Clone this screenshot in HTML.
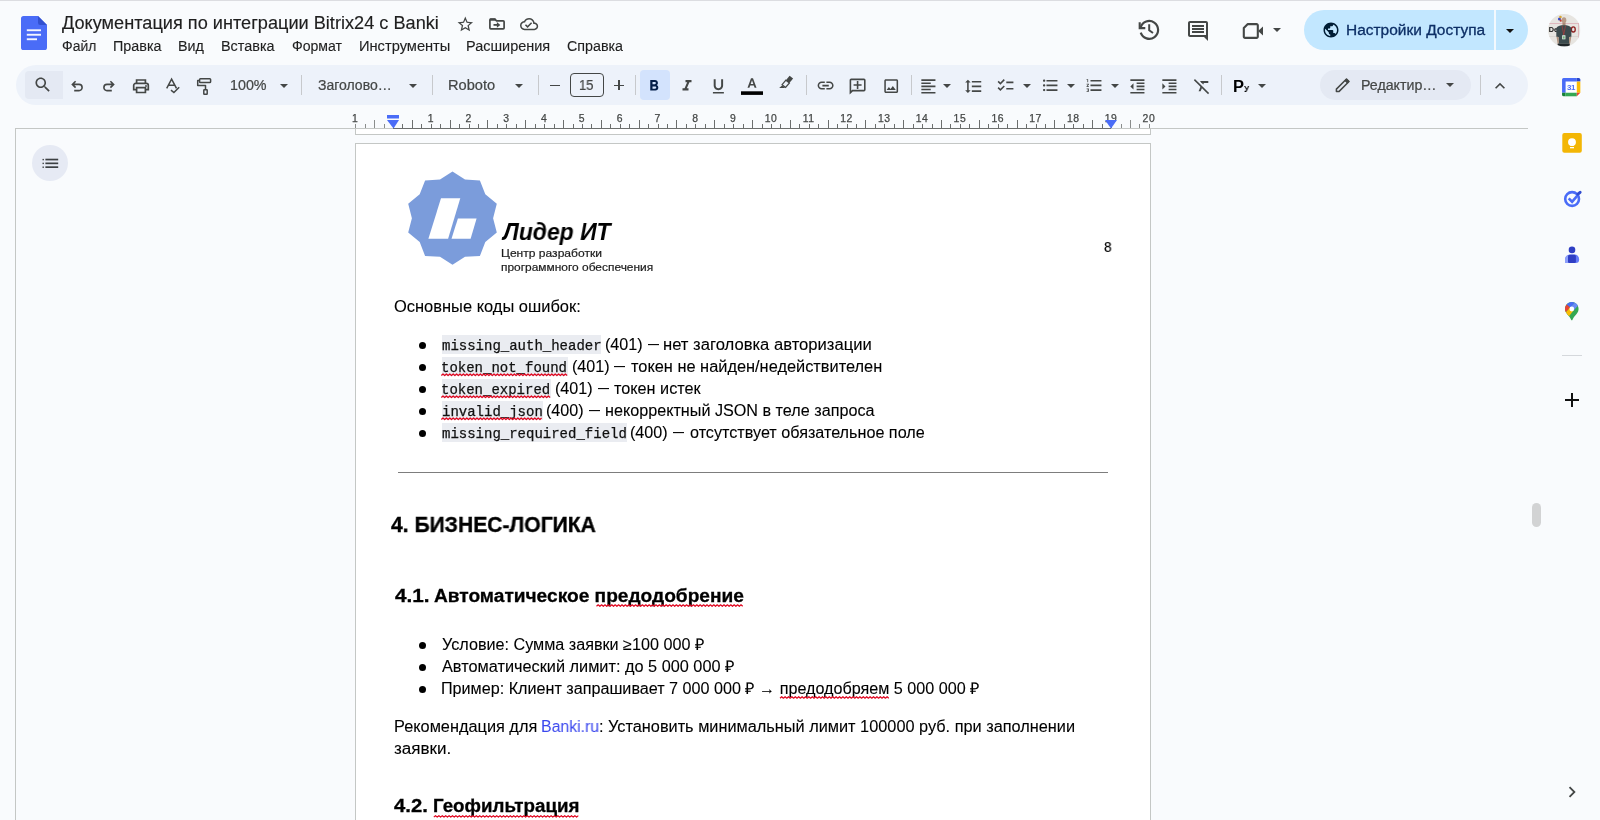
<!DOCTYPE html>
<html lang="ru"><head><meta charset="utf-8">
<title>Документация по интеграции Bitrix24 с Banki – Google Документы</title>
<style>
html,body{margin:0;padding:0}
html{overflow:hidden;width:1600px;height:820px}
body{width:1600px;height:820px;overflow:hidden;background:#f9fbfd;font-family:"Liberation Sans",sans-serif;position:relative;color:#1f1f1f}
.a{position:absolute}
.t{will-change:transform;position:absolute;white-space:nowrap;line-height:1;margin:0;padding:0;transform-origin:0 0}
svg{position:absolute;overflow:visible}
.ic{fill:#444746}
.dv{position:absolute;width:1px;height:20px;top:75px;background:#c7c9cc}
.car{position:absolute;width:0;height:0;border-left:4px solid transparent;border-right:4px solid transparent;border-top:4px solid #444746}
.tb{font-size:14px;color:#444746}
.mn{font-size:14px;color:#1f1f1f;top:39px}
.doc{color:#000}
.p{font-size:14.67px}
.code{font-family:"Liberation Mono",monospace;font-size:14px;color:#1a1a1a}
.cbg{position:absolute;background:#eaecf1;height:19px}
.bul{position:absolute;width:7px;height:7px;border-radius:50%;background:#000}
</style></head><body>
<!-- top hairline -->
<div class="a" style="left:0;top:0;width:1600px;height:1px;background:#dcdde1"></div>
<!-- docs logo -->
<svg style="left:21px;top:16px" width="26" height="34" viewBox="0 0 26 34">
<path d="M2.6 0H17l9 9v22.4A2.6 2.6 0 0 1 23.4 34H2.6A2.6 2.6 0 0 1 0 31.400V2.6A2.6 2.6 0 0 1 2.600 0z" fill="#4a6cf7"/>
<path d="M17 0l9 9h-6.800A2.200 2.200 0 0 1 17 6.800z" fill="#3250d0"/>
<rect x="5.800" y="13.300" width="14.200" height="1.900" fill="#f3f5ff"/><rect x="5.800" y="17.800" width="14.200" height="1.900" fill="#f3f5ff"/><rect x="5.800" y="22.300" width="10.200" height="1.900" fill="#f3f5ff"/>
</svg>
<!-- star / move / cloud -->
<svg class="ic" style="left:455.700px;top:14.800px" width="18.600" height="18.600" viewBox="0 0 24 24"><path d="M22 9.240l-7.190-.620L12 2 9.190 8.630 2 9.240l5.460 4.730L5.820 21 12 17.270 18.180 21l-1.630-7.030L22 9.240zM12 15.400l-3.760 2.270 1-4.280-3.320-2.880 4.380-.38L12 6.100l1.710 4.040 4.380.38-3.320 2.880 1 4.280L12 15.400z"/></svg>
<svg style="left:485px;top:14px" width="24" height="20" viewBox="485 14 24 20"><path d="M490.800 19H494.900L496.500 20.800H503.200A.9 .9 0 0 1 504.100 21.700V28A.9 .9 0 0 1 503.200 28.900H490.800A.9 .9 0 0 1 489.900 28V19.900A.9 .9 0 0 1 490.800 19z" fill="none" stroke="#444746" stroke-width="1.700"/><path d="M489.900 18.600H495.200L496.800 20.800H489.900z" fill="#444746"/><path d="M493.500 24.900H498" stroke="#444746" stroke-width="1.800"/><path d="M496.900 22.100L500.300 24.900 496.900 27.700z" fill="#444746"/></svg>
<svg class="ic" style="left:519.600px;top:15px" width="18.200" height="18.200" viewBox="0 0 24 24"><path d="M19.350 10.040C18.670 6.590 15.640 4 12 4 9.110 4 6.600 5.640 5.350 8.040 2.340 8.360 0 10.910 0 14c0 3.310 2.690 6 6 6h13c2.760 0 5-2.240 5-5 0-2.640-2.050-4.780-4.650-4.960zM19 18H6c-2.210 0-4-1.790-4-4s1.790-4 4-4h.71C7.370 7.690 9.480 6 12 6c3.040 0 5.500 2.460 5.500 5.500v.5H19c1.660 0 3 1.340 3 3s-1.340 3-3 3zm-9-3.820l-2.090-2.090L6.500 13.500 10 17l6.010-6.010-1.410-1.410z"/></svg>
<!-- history -->
<svg style="left:1130px;top:12px" width="36" height="36" viewBox="1130 12 36 36" fill="none" stroke="#444746">
<path d="M1140.64 27.45A8.9 8.9 0 1 1 1140.74 32.65" stroke-width="2.200"/>
<path d="M1139.700 22.300V28.100H1145.300" stroke-width="2.100"/>
<path d="M1149.200 24.300V30.300L1153 33" stroke-width="2"/>
</svg>
<!-- comments -->
<svg class="ic" style="left:1186px;top:19px" width="24" height="24" viewBox="0 0 24 24"><path d="M21.990 4c0-1.100-.89-2-1.990-2H4c-1.100 0-2 .9-2 2v12c0 1.100.9 2 2 2h14l4 4-.01-18zM20 4v12H4V4h16zM6 12h12v2H6zm0-3h12v2H6zm0-3h12v2H6z"/></svg>
<!-- meet camera -->
<svg style="left:1242px;top:22px" width="22" height="18" viewBox="0 0 22 18"><path d="M5.800 2.100H14.600a1.200 1.200 0 0 1 1.200 1.200V14.700a1.200 1.200 0 0 1 -1.200 1.200H3a1.200 1.200 0 0 1 -1.200 -1.200V6.100z" fill="none" stroke="#444746" stroke-width="2.100" stroke-linejoin="round"/><path d="M16 9l5-4.500v9z" fill="#444746"/></svg>
<div class="car" style="left:1273px;top:28px"></div>
<!-- share pill -->
<div class="a" style="left:1304px;top:10px;width:224px;height:40px;border-radius:20px;background:#c2e7ff"></div>
<div class="a" style="left:1494px;top:10px;width:1.500px;height:40px;background:#f3f9fe"></div>
<svg style="left:1321.500px;top:21.400px" width="18" height="18" viewBox="0 0 24 24"><path fill="#001d35" d="M12 2C6.480 2 2 6.480 2 12s4.480 10 10 10 10-4.480 10-10S17.520 2 12 2zm-1 17.930c-3.950-.49-7-3.850-7-7.930 0-.62.080-1.210.21-1.790L9 15v1c0 1.100.9 2 2 2v1.930zm6.900-2.540c-.26-.81-1-1.390-1.900-1.390h-1v-3c0-.55-.45-1-1-1H8v-2h2c.55 0 1-.45 1-1V7h2c1.100 0 2-.9 2-2v-.41c2.930 1.190 5 4.060 5 7.410 0 2.080-.8 3.970-2.100 5.390z"/></svg>
<div class="car" style="left:1506px;top:28.500px;border-top-color:#111;border-left-width:4.500px;border-right-width:4.500px;border-top-width:4.500px"></div>
<!-- avatar -->
<svg style="left:1548px;top:13.700px;will-change:transform" width="32.400" height="32.400" viewBox="0 0 32 32"><defs><clipPath id="av"><circle cx="16" cy="16" r="16"/></clipPath></defs><g clip-path="url(#av)">
<rect width="32" height="32" fill="#e7e5e1"/>
<rect x="0" y="9.300" width="31" height=".6" fill="#d99aa5"/><rect x="29.800" y="9.300" width=".6" height="18" fill="#d99aa5"/>
<rect x="0" y="22" width="32" height=".5" fill="#cfc9c4"/>
<text x=".8" y="18.200" font-size="7.200" font-weight="bold" font-family="Liberation Sans, sans-serif" fill="#111">De</text>
<ellipse cx="25" cy="15.300" rx="1.900" ry="2.500" fill="none" stroke="#8e1f1f" stroke-width="1.300"/>
<circle cx="11.300" cy="5" r="1.500" fill="#3b49c4"/><circle cx="12.300" cy="3" r="1.300" fill="#d8a634"/><circle cx="12.600" cy="6.600" r="1.100" fill="#c8352f"/>
<ellipse cx="15.800" cy="6.200" rx="2.300" ry="3.100" fill="#b99a86"/>
<path d="M14.300 8.800h3v3h-3z" fill="#a98a77"/>
<path d="M8.200 22.500V15c0-2.200 2.300-3.400 5.200-3.800h4.700c2.900.4 5 1.600 5 3.800v7.500l-2.200.2V29.500H10.400V22.700z" fill="#3c4b4e"/>
<path d="M8.400 22.500l2 .2.300 6.800-1.200-.3z" fill="#b0907c"/><path d="M23 22.500l-2 .2-.3 6.800 1.200-.3z" fill="#b0907c"/>
<path d="M13.900 11.600L15.500 20.600 17.300 11.600" fill="none" stroke="#b23b3b" stroke-width=".7"/>
<rect x="14" y="21" width="3.200" height="4" fill="#e9f1ea"/><rect x="14.700" y="22" width="1.800" height="2.400" fill="#6fae7a"/>
<rect x="9.500" y="29.300" width="12" height="3" fill="#1f2528"/>
</g></svg>
<!-- toolbar pill -->
<div class="a" style="left:16px;top:65px;width:1512px;height:40px;border-radius:20px;background:#edf2fa"></div>
<div class="a" style="left:25px;top:71px;width:37.500px;height:28px;border-radius:4px 0 0 4px;background:#e4e9f3"></div>
<!-- search -->
<svg class="ic" style="left:33px;top:75.300px" width="19.600" height="19.600" viewBox="0 0 24 24"><path d="M15.500 14h-.79l-.28-.27C15.410 12.590 16 11.110 16 9.500 16 5.910 13.090 3 9.500 3S3 5.910 3 9.500 5.910 16 9.500 16c1.610 0 3.090-.59 4.230-1.570l.27.28v.79l5 4.990L20.490 19l-4.990-5zm-6 0C7.010 14 5 11.990 5 9.500S7.010 5 9.500 5 14 7.010 14 9.500 11.990 14 9.500 14z"/></svg>
<!-- undo / redo -->
<svg style="left:70.200px;top:78.300px" width="16" height="16" viewBox="0 0 16 16"><path d="M5.600 3.200L2.400 6.400l3.200 3.200M2.600 6.400h6.400a3.100 3.100 0 0 1 0 6.200H4.200" fill="none" stroke="#444746" stroke-width="1.600"/></svg>
<svg style="left:100px;top:78.300px" width="16" height="16" viewBox="0 0 16 16"><path d="M10.400 3.200l3.200 3.200-3.200 3.200M13.400 6.400H7a3.100 3.100 0 0 0 0 6.200h4.800" fill="none" stroke="#444746" stroke-width="1.600"/></svg>
<!-- print -->
<svg style="left:132px;top:77.500px" width="18" height="17" viewBox="0 0 18 17"><path d="M4.600 5.200V2h8.800v3.200M4.600 11.600H1.700V7.400a2 2 0 0 1 2-2h10.600a2 2 0 0 1 2 2v4.200h-2.900M4.600 9.600h8.800v4.900H4.600z" fill="none" stroke="#444746" stroke-width="1.700"/><circle cx="14" cy="8" r=".9" fill="#444746"/></svg>
<!-- spellcheck -->
<svg style="left:164px;top:76px" width="18" height="19" viewBox="164 76 18 19"><path d="M166.700 88.300L171.600 79.200 176.500 88.300M168.500 85.300h6.200" fill="none" stroke="#444746" stroke-width="1.500" stroke-linejoin="miter"/><path d="M171 90.200l2.900 2.400 5.300-5.400" fill="none" stroke="#444746" stroke-width="1.500"/></svg>
<!-- paint format -->
<svg style="left:196px;top:77px" width="17" height="19" viewBox="196 77 17 19"><rect x="199.600" y="78.700" width="11" height="3.800" rx=".8" fill="none" stroke="#444746" stroke-width="1.500"/><path d="M199.600 80.600h-1.900v4.900h7.800v3.800" fill="none" stroke="#444746" stroke-width="1.500" stroke-linejoin="round"/><rect x="203.800" y="89.800" width="3.400" height="4.500" rx=".5" fill="none" stroke="#444746" stroke-width="1.500"/></svg>
<div class="car" style="left:280px;top:84px"></div>
<div class="dv" style="left:301px"></div>
<div class="car" style="left:409px;top:83.500px"></div>
<div class="dv" style="left:432px"></div>
<div class="car" style="left:515px;top:83.500px"></div>
<div class="dv" style="left:538px"></div>
<!-- minus, size box, plus -->
<div class="a" style="left:550.300px;top:84.500px;width:9.700px;height:1.600px;background:#444746"></div>
<div class="a" style="left:570px;top:73px;width:32px;height:22px;border:1px solid #444746;border-radius:4px"></div>
<div class="a" style="left:614px;top:84.500px;width:10px;height:1.600px;background:#444746"></div>
<div class="a" style="left:618.200px;top:80.300px;width:1.600px;height:10px;background:#444746"></div>
<div class="dv" style="left:635px"></div>
<!-- bold (active) -->
<div class="a" style="left:640px;top:70px;width:30px;height:30px;border-radius:4px;background:#d3e3fd"></div>
<svg style="left:645.200px;top:76.700px" width="18" height="18" viewBox="0 0 24 24"><path fill="#041e49" d="M15.600 10.790c.97-.67 1.650-1.770 1.650-2.790 0-2.260-1.750-4-4-4H7v14h7.040c2.090 0 3.710-1.700 3.710-3.790 0-1.520-.86-2.820-2.150-3.420zM10 6.500h3c.83 0 1.500.67 1.500 1.500s-.67 1.500-1.500 1.500h-3v-3zm3.500 9H10v-3h3.500c.83 0 1.500.67 1.500 1.500s-.67 1.500-1.500 1.500z"/></svg>
<svg class="ic" style="left:678px;top:76.900px" width="18" height="18" viewBox="0 0 24 24"><path d="M10 4v3h2.210l-3.420 8H6v3h8v-3h-2.210l3.420-8H18V4z"/></svg>
<svg class="ic" style="left:709.200px;top:76.500px" width="18.800" height="18.800" viewBox="0 0 24 24"><path d="M12 17c3.310 0 6-2.690 6-6V3h-2.500v8c0 1.930-1.570 3.500-3.500 3.500S8.500 12.930 8.500 11V3H6v8c0 3.310 2.690 6 6 6zm-7 2v2h14v-2H5z"/></svg>
<!-- text colour -->
<svg style="left:741px;top:76px" width="22" height="20" viewBox="0 0 22 20"><path d="M6.500 11.700L10 2.200h2l3.500 9.500h-1.900l-.8-2.300H9.200l-.8 2.300zm3.200-3.800h2.600L11 4.200z" fill="#444746"/><rect x="0" y="15.300" width="22" height="3.600" fill="#000"/></svg>
<!-- highlighter -->
<svg style="left:778px;top:74px" width="17" height="16" viewBox="778 74 17 16"><polygon points="789.600,75.800 793.100,78.600 789.400,83 785.900,80.200" fill="#444746"/><polygon points="785.900,80.200 789.400,83 785.600,87.500 782.100,84.700" fill="none" stroke="#444746" stroke-width="1.200"/><polygon points="782.300,85.300 785,87.400 784.400,88 779.200,88" fill="#444746"/></svg>
<div class="dv" style="left:806px"></div>
<!-- link -->
<svg class="ic" style="left:816.200px;top:76.200px" width="19.200" height="19.200" viewBox="0 0 24 24"><path d="M3.900 12c0-1.710 1.390-3.100 3.100-3.100h4V7H7c-2.760 0-5 2.240-5 5s2.240 5 5 5h4v-1.900H7c-1.710 0-3.100-1.390-3.100-3.100zM8 13h8v-2H8v2zm9-6h-4v1.900h4c1.710 0 3.100 1.390 3.100 3.100s-1.390 3.100-3.100 3.100h-4V17h4c2.760 0 5-2.240 5-5s-2.240-5-5-5z"/></svg>
<!-- add comment (tail bottom-left) -->
<svg class="ic" style="left:848.400px;top:76.600px" width="19.200" height="19.200" viewBox="0 0 24 24"><g transform="translate(24,0) scale(-1,1)"><path d="M22 4c0-1.100-.9-2-2-2H4c-1.100 0-2 .9-2 2v12c0 1.100.9 2 2 2h14l4 4V4zm-2 13.170L18.830 16H4V4h16v13.170zM13 5h-2v4H7v2h4v4h2v-4h4V9h-4z"/></g></svg>
<!-- image -->
<svg class="ic" style="left:881.800px;top:76.600px" width="18.400" height="18.400" viewBox="0 0 24 24"><path d="M19 5v14H5V5h14m0-2H5c-1.100 0-2 .9-2 2v14c0 1.100.9 2 2 2h14c1.100 0 2-.9 2-2V5c0-1.100-.9-2-2-2zm-4.860 8.860l-3 3.870L9 13.140 6 17h12l-3.860-5.140z"/></svg>
<div class="dv" style="left:911px"></div>
<!-- align -->
<svg class="ic" style="left:919.400px;top:76.900px" width="18.800" height="18.800" viewBox="0 0 24 24"><path d="M15 15H3v2h12v-2zm0-8H3v2h12V7zM3 13h18v-2H3v2zm0 8h18v-2H3v2zM3 3v2h18V3H3z"/></svg>
<div class="car" style="left:943px;top:83.500px"></div>
<!-- line spacing -->
<svg class="ic" style="left:963.500px;top:76.700px" width="18.800" height="18.800" viewBox="0 0 24 24"><path d="M6 7h2.500L5 3.500 1.500 7H4v10H1.500L5 20.500 8.500 17H6V7zm4-2v2h12V5H10zm0 14h12v-2H10v2zm0-6h12v-2H10v2z"/></svg>
<!-- checklist -->
<svg class="ic" style="left:996px;top:76px" width="19" height="19" viewBox="0 0 24 24"><path d="M22 7h-9v2h9V7zm0 8h-9v2h9v-2zM5.540 11L2 7.460l1.410-1.410 2.120 2.120 4.240-4.240 1.410 1.410L5.540 11zm0 8L2 15.460l1.410-1.410 2.120 2.120 4.240-4.240 1.410 1.410L5.540 19z"/></svg>
<div class="car" style="left:1023px;top:83.500px"></div>
<!-- bullets -->
<svg class="ic" style="left:1040.800px;top:76.400px" width="18.800" height="18.800" viewBox="0 0 24 24"><path d="M4 10.500c-.83 0-1.500.67-1.500 1.500s.67 1.500 1.500 1.500 1.500-.67 1.500-1.500-.67-1.500-1.500-1.500zm0-6c-.83 0-1.500.67-1.500 1.500S3.170 7.500 4 7.500 5.500 6.830 5.500 6 4.830 4.500 4 4.500zm0 12c-.83 0-1.500.68-1.500 1.500s.68 1.500 1.500 1.500 1.500-.68 1.500-1.500-.67-1.500-1.500-1.500zM7 19h14v-2H7v2zm0-6h14v-2H7v2zm0-8v2h14V5H7z"/></svg>
<div class="car" style="left:1067px;top:83.500px"></div>
<!-- numbered -->
<svg class="ic" style="left:1084.800px;top:76.400px" width="18.800" height="18.800" viewBox="0 0 24 24"><path d="M2 17h2v.5H3v1h1v.5H2v1h3v-4H2v1zm1-9h1V4H2v1h1v3zm-1 3h1.800L2 13.100v.9h3v-1H3.200L5 10.900V10H2v1zm5-6v2h14V5H7zm0 14h14v-2H7v2zm0-6h14v-2H7v2z"/></svg>
<div class="car" style="left:1111px;top:83.500px"></div>
<!-- outdent / indent -->
<svg class="ic" style="left:1128.400px;top:77px" width="18.800" height="18.800" viewBox="0 0 24 24"><path d="M11 17h10v-2H11v2zm-8-5l4 4V8l-4 4zm0 9h18v-2H3v2zM3 3v2h18V3H3zm8 6h10V7H11v2zm0 4h10v-2H11v2z"/></svg>
<svg class="ic" style="left:1160.400px;top:77px" width="18.800" height="18.800" viewBox="0 0 24 24"><path d="M3 21h18v-2H3v2zM3 8v8l4-4-4-4zm8 9h10v-2H11v2zM3 3v2h18V3H3zm8 6h10V7H11v2zm0 4h10v-2H11v2z"/></svg>
<!-- clear formatting -->
<svg style="left:1193px;top:78px" width="17" height="17" viewBox="0 0 17 17"><path d="M1.400 1.600L15.600 15.600" stroke="#444746" stroke-width="1.500" fill="none"/><path d="M7 3h8.300v1.900H10.900L10.300 6.400 8.800 4.900H8.400z" fill="#444746"/><path d="M7.700 8.300L9.100 9.700 7.600 13.300H5.600z" fill="#444746"/></svg>
<div class="dv" style="left:1221px"></div>
<div class="car" style="left:1258px;top:84px"></div>
<!-- mode pill -->
<div class="a" style="left:1320px;top:70px;width:151px;height:30px;border-radius:15px;background:#e4e9f3"></div>
<svg style="left:1330px;top:74px" width="24" height="22" viewBox="1330 74 24 22"><path d="M1346.500 79L1349 81.500 1338.900 91.600H1336.400V89.100z" fill="none" stroke="#444746" stroke-width="1.500" stroke-linejoin="round"/><path d="M1344.800 80.700L1346.500 79 1349 81.500 1347.300 83.200z" fill="#444746" stroke="#444746" stroke-width=".8" stroke-linejoin="round"/></svg>
<div class="car" style="left:1446px;top:83px"></div>
<div class="dv" style="left:1480px"></div>
<svg class="ic" style="left:1490px;top:75.500px" width="20" height="20" viewBox="0 0 24 24"><path d="M12 8l-6 6 1.410 1.410L12 10.830l4.590 4.580L18 14z"/></svg>
<div class="a" style="left:15px;top:128px;width:1513px;height:1px;background:#c4c7c5"></div>
<div class="a" style="left:15px;top:128px;width:1px;height:692px;background:#c4c7c5"></div>
<div class="a" style="left:393px;top:128px;width:718px;height:1px;background:#6b6e6d"></div>
<svg style="left:0;top:105px;will-change:transform" width="1600" height="30" viewBox="0 105 1600 30">
<line x1="355.5" y1="124" x2="355.5" y2="128" stroke="#8a8d8c" stroke-width="1"/>
<line x1="365.5" y1="124" x2="365.5" y2="128" stroke="#8a8d8c" stroke-width="1"/>
<line x1="374.5" y1="120" x2="374.5" y2="128" stroke="#8a8d8c" stroke-width="1"/>
<line x1="384.5" y1="124" x2="384.5" y2="128" stroke="#8a8d8c" stroke-width="1"/>
<line x1="393.5" y1="124" x2="393.5" y2="128" stroke="#6b6e6d" stroke-width="1"/>
<line x1="402.5" y1="124" x2="402.5" y2="128" stroke="#6b6e6d" stroke-width="1"/>
<line x1="412.5" y1="120" x2="412.5" y2="128" stroke="#6b6e6d" stroke-width="1"/>
<line x1="421.5" y1="124" x2="421.5" y2="128" stroke="#6b6e6d" stroke-width="1"/>
<line x1="431.5" y1="124" x2="431.5" y2="128" stroke="#6b6e6d" stroke-width="1"/>
<line x1="440.5" y1="124" x2="440.5" y2="128" stroke="#6b6e6d" stroke-width="1"/>
<line x1="450.5" y1="120" x2="450.5" y2="128" stroke="#6b6e6d" stroke-width="1"/>
<line x1="459.5" y1="124" x2="459.5" y2="128" stroke="#6b6e6d" stroke-width="1"/>
<line x1="469.5" y1="124" x2="469.5" y2="128" stroke="#6b6e6d" stroke-width="1"/>
<line x1="478.5" y1="124" x2="478.5" y2="128" stroke="#6b6e6d" stroke-width="1"/>
<line x1="487.5" y1="120" x2="487.5" y2="128" stroke="#6b6e6d" stroke-width="1"/>
<line x1="497.5" y1="124" x2="497.5" y2="128" stroke="#6b6e6d" stroke-width="1"/>
<line x1="506.5" y1="124" x2="506.5" y2="128" stroke="#6b6e6d" stroke-width="1"/>
<line x1="516.5" y1="124" x2="516.5" y2="128" stroke="#6b6e6d" stroke-width="1"/>
<line x1="525.5" y1="120" x2="525.5" y2="128" stroke="#6b6e6d" stroke-width="1"/>
<line x1="535.5" y1="124" x2="535.5" y2="128" stroke="#6b6e6d" stroke-width="1"/>
<line x1="544.5" y1="124" x2="544.5" y2="128" stroke="#6b6e6d" stroke-width="1"/>
<line x1="554.5" y1="124" x2="554.5" y2="128" stroke="#6b6e6d" stroke-width="1"/>
<line x1="563.5" y1="120" x2="563.5" y2="128" stroke="#6b6e6d" stroke-width="1"/>
<line x1="573.5" y1="124" x2="573.5" y2="128" stroke="#6b6e6d" stroke-width="1"/>
<line x1="582.5" y1="124" x2="582.5" y2="128" stroke="#6b6e6d" stroke-width="1"/>
<line x1="591.5" y1="124" x2="591.5" y2="128" stroke="#6b6e6d" stroke-width="1"/>
<line x1="601.5" y1="120" x2="601.5" y2="128" stroke="#6b6e6d" stroke-width="1"/>
<line x1="610.5" y1="124" x2="610.5" y2="128" stroke="#6b6e6d" stroke-width="1"/>
<line x1="620.5" y1="124" x2="620.5" y2="128" stroke="#6b6e6d" stroke-width="1"/>
<line x1="629.5" y1="124" x2="629.5" y2="128" stroke="#6b6e6d" stroke-width="1"/>
<line x1="639.5" y1="120" x2="639.5" y2="128" stroke="#6b6e6d" stroke-width="1"/>
<line x1="648.5" y1="124" x2="648.5" y2="128" stroke="#6b6e6d" stroke-width="1"/>
<line x1="658.5" y1="124" x2="658.5" y2="128" stroke="#6b6e6d" stroke-width="1"/>
<line x1="667.5" y1="124" x2="667.5" y2="128" stroke="#6b6e6d" stroke-width="1"/>
<line x1="676.5" y1="120" x2="676.5" y2="128" stroke="#6b6e6d" stroke-width="1"/>
<line x1="686.5" y1="124" x2="686.5" y2="128" stroke="#6b6e6d" stroke-width="1"/>
<line x1="695.5" y1="124" x2="695.5" y2="128" stroke="#6b6e6d" stroke-width="1"/>
<line x1="705.5" y1="124" x2="705.5" y2="128" stroke="#6b6e6d" stroke-width="1"/>
<line x1="714.5" y1="120" x2="714.5" y2="128" stroke="#6b6e6d" stroke-width="1"/>
<line x1="724.5" y1="124" x2="724.5" y2="128" stroke="#6b6e6d" stroke-width="1"/>
<line x1="733.5" y1="124" x2="733.5" y2="128" stroke="#6b6e6d" stroke-width="1"/>
<line x1="743.5" y1="124" x2="743.5" y2="128" stroke="#6b6e6d" stroke-width="1"/>
<line x1="752.5" y1="120" x2="752.5" y2="128" stroke="#6b6e6d" stroke-width="1"/>
<line x1="762.5" y1="124" x2="762.5" y2="128" stroke="#6b6e6d" stroke-width="1"/>
<line x1="771.5" y1="124" x2="771.5" y2="128" stroke="#6b6e6d" stroke-width="1"/>
<line x1="780.5" y1="124" x2="780.5" y2="128" stroke="#6b6e6d" stroke-width="1"/>
<line x1="790.5" y1="120" x2="790.5" y2="128" stroke="#6b6e6d" stroke-width="1"/>
<line x1="799.5" y1="124" x2="799.5" y2="128" stroke="#6b6e6d" stroke-width="1"/>
<line x1="809.5" y1="124" x2="809.5" y2="128" stroke="#6b6e6d" stroke-width="1"/>
<line x1="818.5" y1="124" x2="818.5" y2="128" stroke="#6b6e6d" stroke-width="1"/>
<line x1="828.5" y1="120" x2="828.5" y2="128" stroke="#6b6e6d" stroke-width="1"/>
<line x1="837.5" y1="124" x2="837.5" y2="128" stroke="#6b6e6d" stroke-width="1"/>
<line x1="847.5" y1="124" x2="847.5" y2="128" stroke="#6b6e6d" stroke-width="1"/>
<line x1="856.5" y1="124" x2="856.5" y2="128" stroke="#6b6e6d" stroke-width="1"/>
<line x1="865.5" y1="120" x2="865.5" y2="128" stroke="#6b6e6d" stroke-width="1"/>
<line x1="875.5" y1="124" x2="875.5" y2="128" stroke="#6b6e6d" stroke-width="1"/>
<line x1="884.5" y1="124" x2="884.5" y2="128" stroke="#6b6e6d" stroke-width="1"/>
<line x1="894.5" y1="124" x2="894.5" y2="128" stroke="#6b6e6d" stroke-width="1"/>
<line x1="903.5" y1="120" x2="903.5" y2="128" stroke="#6b6e6d" stroke-width="1"/>
<line x1="913.5" y1="124" x2="913.5" y2="128" stroke="#6b6e6d" stroke-width="1"/>
<line x1="922.5" y1="124" x2="922.5" y2="128" stroke="#6b6e6d" stroke-width="1"/>
<line x1="932.5" y1="124" x2="932.5" y2="128" stroke="#6b6e6d" stroke-width="1"/>
<line x1="941.5" y1="120" x2="941.5" y2="128" stroke="#6b6e6d" stroke-width="1"/>
<line x1="950.5" y1="124" x2="950.5" y2="128" stroke="#6b6e6d" stroke-width="1"/>
<line x1="960.5" y1="124" x2="960.5" y2="128" stroke="#6b6e6d" stroke-width="1"/>
<line x1="969.5" y1="124" x2="969.5" y2="128" stroke="#6b6e6d" stroke-width="1"/>
<line x1="979.5" y1="120" x2="979.5" y2="128" stroke="#6b6e6d" stroke-width="1"/>
<line x1="988.5" y1="124" x2="988.5" y2="128" stroke="#6b6e6d" stroke-width="1"/>
<line x1="998.5" y1="124" x2="998.5" y2="128" stroke="#6b6e6d" stroke-width="1"/>
<line x1="1007.5" y1="124" x2="1007.5" y2="128" stroke="#6b6e6d" stroke-width="1"/>
<line x1="1017.5" y1="120" x2="1017.5" y2="128" stroke="#6b6e6d" stroke-width="1"/>
<line x1="1026.5" y1="124" x2="1026.5" y2="128" stroke="#6b6e6d" stroke-width="1"/>
<line x1="1036.5" y1="124" x2="1036.5" y2="128" stroke="#6b6e6d" stroke-width="1"/>
<line x1="1045.5" y1="124" x2="1045.5" y2="128" stroke="#6b6e6d" stroke-width="1"/>
<line x1="1054.5" y1="120" x2="1054.5" y2="128" stroke="#6b6e6d" stroke-width="1"/>
<line x1="1064.5" y1="124" x2="1064.5" y2="128" stroke="#6b6e6d" stroke-width="1"/>
<line x1="1073.5" y1="124" x2="1073.5" y2="128" stroke="#6b6e6d" stroke-width="1"/>
<line x1="1083.5" y1="124" x2="1083.5" y2="128" stroke="#6b6e6d" stroke-width="1"/>
<line x1="1092.5" y1="120" x2="1092.5" y2="128" stroke="#6b6e6d" stroke-width="1"/>
<line x1="1102.5" y1="124" x2="1102.5" y2="128" stroke="#6b6e6d" stroke-width="1"/>
<line x1="1111.5" y1="124" x2="1111.5" y2="128" stroke="#6b6e6d" stroke-width="1"/>
<line x1="1121.5" y1="124" x2="1121.5" y2="128" stroke="#8a8d8c" stroke-width="1"/>
<line x1="1130.5" y1="120" x2="1130.5" y2="128" stroke="#8a8d8c" stroke-width="1"/>
<line x1="1139.5" y1="124" x2="1139.5" y2="128" stroke="#8a8d8c" stroke-width="1"/>
<line x1="1149.5" y1="124" x2="1149.5" y2="128" stroke="#8a8d8c" stroke-width="1"/>
<text x="355.2" y="122" font-size="10.4" text-anchor="middle" fill="#444746" stroke="#444746" stroke-width=".25" letter-spacing=".5" font-family="Liberation Sans, sans-serif">1</text>
<text x="430.8" y="122" font-size="10.4" text-anchor="middle" fill="#444746" stroke="#444746" stroke-width=".25" letter-spacing=".5" font-family="Liberation Sans, sans-serif">1</text>
<text x="468.6" y="122" font-size="10.4" text-anchor="middle" fill="#444746" stroke="#444746" stroke-width=".25" letter-spacing=".5" font-family="Liberation Sans, sans-serif">2</text>
<text x="506.4" y="122" font-size="10.4" text-anchor="middle" fill="#444746" stroke="#444746" stroke-width=".25" letter-spacing=".5" font-family="Liberation Sans, sans-serif">3</text>
<text x="544.2" y="122" font-size="10.4" text-anchor="middle" fill="#444746" stroke="#444746" stroke-width=".25" letter-spacing=".5" font-family="Liberation Sans, sans-serif">4</text>
<text x="582.0" y="122" font-size="10.4" text-anchor="middle" fill="#444746" stroke="#444746" stroke-width=".25" letter-spacing=".5" font-family="Liberation Sans, sans-serif">5</text>
<text x="619.8" y="122" font-size="10.4" text-anchor="middle" fill="#444746" stroke="#444746" stroke-width=".25" letter-spacing=".5" font-family="Liberation Sans, sans-serif">6</text>
<text x="657.6" y="122" font-size="10.4" text-anchor="middle" fill="#444746" stroke="#444746" stroke-width=".25" letter-spacing=".5" font-family="Liberation Sans, sans-serif">7</text>
<text x="695.4" y="122" font-size="10.4" text-anchor="middle" fill="#444746" stroke="#444746" stroke-width=".25" letter-spacing=".5" font-family="Liberation Sans, sans-serif">8</text>
<text x="733.2" y="122" font-size="10.4" text-anchor="middle" fill="#444746" stroke="#444746" stroke-width=".25" letter-spacing=".5" font-family="Liberation Sans, sans-serif">9</text>
<text x="771.0" y="122" font-size="10.4" text-anchor="middle" fill="#444746" stroke="#444746" stroke-width=".25" letter-spacing=".5" font-family="Liberation Sans, sans-serif">10</text>
<text x="808.7" y="122" font-size="10.4" text-anchor="middle" fill="#444746" stroke="#444746" stroke-width=".25" letter-spacing=".5" font-family="Liberation Sans, sans-serif">11</text>
<text x="846.5" y="122" font-size="10.4" text-anchor="middle" fill="#444746" stroke="#444746" stroke-width=".25" letter-spacing=".5" font-family="Liberation Sans, sans-serif">12</text>
<text x="884.3" y="122" font-size="10.4" text-anchor="middle" fill="#444746" stroke="#444746" stroke-width=".25" letter-spacing=".5" font-family="Liberation Sans, sans-serif">13</text>
<text x="922.1" y="122" font-size="10.4" text-anchor="middle" fill="#444746" stroke="#444746" stroke-width=".25" letter-spacing=".5" font-family="Liberation Sans, sans-serif">14</text>
<text x="959.9" y="122" font-size="10.4" text-anchor="middle" fill="#444746" stroke="#444746" stroke-width=".25" letter-spacing=".5" font-family="Liberation Sans, sans-serif">15</text>
<text x="997.7" y="122" font-size="10.4" text-anchor="middle" fill="#444746" stroke="#444746" stroke-width=".25" letter-spacing=".5" font-family="Liberation Sans, sans-serif">16</text>
<text x="1035.5" y="122" font-size="10.4" text-anchor="middle" fill="#444746" stroke="#444746" stroke-width=".25" letter-spacing=".5" font-family="Liberation Sans, sans-serif">17</text>
<text x="1073.3" y="122" font-size="10.4" text-anchor="middle" fill="#444746" stroke="#444746" stroke-width=".25" letter-spacing=".5" font-family="Liberation Sans, sans-serif">18</text>
<text x="1111.1" y="122" font-size="10.4" text-anchor="middle" fill="#444746" stroke="#444746" stroke-width=".25" letter-spacing=".5" font-family="Liberation Sans, sans-serif">19</text>
<text x="1148.9" y="122" font-size="10.4" text-anchor="middle" fill="#444746" stroke="#444746" stroke-width=".25" letter-spacing=".5" font-family="Liberation Sans, sans-serif">20</text>
<rect x="387" y="115" width="12" height="3.5" fill="#4a6cf7"/>
<polygon points="387,120 399,120 393.5,128.5" fill="#4a6cf7"/>
<polygon points="1105,120 1117,120 1111,128.5" fill="#4a6cf7"/>
</svg>
<!-- outline button -->
<div class="a" style="left:32px;top:145px;width:36px;height:36px;border-radius:50%;background:#e6eaf4"></div>
<svg style="left:42px;top:157.500px" width="17" height="11" viewBox="0 0 17 11"><g fill="#3c4043"><rect x=".5" y=".9" width="1.400" height="1.400"/><rect x="3.400" y=".7" width="12.800" height="1.700"/><rect x=".5" y="4.700" width="1.400" height="1.400"/><rect x="3.400" y="4.500" width="12.800" height="1.700"/><rect x=".5" y="8.500" width="1.400" height="1.400"/><rect x="3.400" y="8.300" width="12.800" height="1.700"/></g></svg>
<!-- previous page bottom -->
<div class="a" style="left:355px;top:129px;width:794px;height:5px;background:#fff;border:1px solid #c4c7c5;border-top:none"></div>
<!-- page -->
<div class="a" style="left:355px;top:143px;width:794px;height:677px;background:#fff;border:1px solid #c4c7c5;border-bottom:none"></div>
<!-- scrollbar thumb -->
<div class="a" style="left:1531.500px;top:503px;width:9px;height:23.500px;border-radius:4.500px;background:#d2d3d4"></div>
<!-- logo badge -->
<svg style="left:400px;top:165px" width="110" height="110" viewBox="400 165 110 110">
<polygon fill="#7b9cdb" points="452.5,171.6 465.0,179.6 479.9,180.5 485.3,194.3 496.8,203.8 493.1,218.2 496.8,232.6 485.3,242.1 479.9,255.9 465.0,256.8 452.5,264.8 440.0,256.8 425.1,255.9 419.7,242.1 408.2,232.6 411.9,218.2 408.2,203.8 419.7,194.3 425.1,180.5 440.0,179.6"/>
<polygon fill="#fff" points="441,198.250 460.300,198.250 448.100,238.750 428.400,238.750"/>
<polygon fill="#fff" points="457.900,218.500 476.600,218.500 470.600,238.750 451.500,238.750"/>
</svg>
<!-- code backgrounds -->
<div class="cbg" style="left:441.750px;top:335px;width:159.600px"></div>
<div class="cbg" style="left:441.750px;top:357px;width:126px"></div>
<div class="cbg" style="left:441.750px;top:379px;width:109.200px"></div>
<div class="cbg" style="left:441.750px;top:401px;width:100.800px"></div>
<div class="cbg" style="left:441.750px;top:423px;width:184.800px"></div>
<!-- bullets -->
<div class="bul" style="left:419px;top:342px"></div>
<div class="bul" style="left:419px;top:364px"></div>
<div class="bul" style="left:419px;top:386px"></div>
<div class="bul" style="left:419px;top:408px"></div>
<div class="bul" style="left:419px;top:430px"></div>
<div class="bul" style="left:419px;top:642px"></div>
<div class="bul" style="left:419px;top:664px"></div>
<div class="bul" style="left:419px;top:686px"></div>
<!-- horizontal rule -->
<div class="a" style="left:398px;top:471.500px;width:710px;height:1px;background:#7d7d7d"></div>
<div class="t" id="title" style="left:61.60px;top:14.69px;font-size:17.5px;color:#1f1f1f;transform:scaleX(1.0374);-webkit-text-stroke:0.15px #1f1f1f;">Документация по интеграции Bitrix24 с Banki</div>
<div class="t" id="m0" style="left:62.40px;top:38.75px;font-size:14px;color:#1f1f1f;transform:scaleX(0.9956);-webkit-text-stroke:0.12px #1f1f1f;">Файл</div>
<div class="t" id="m1" style="left:113.08px;top:38.75px;font-size:14px;color:#1f1f1f;transform:scaleX(1.0246);-webkit-text-stroke:0.12px #1f1f1f;">Правка</div>
<div class="t" id="m2" style="left:178.38px;top:38.75px;font-size:14px;color:#1f1f1f;transform:scaleX(1.0224);-webkit-text-stroke:0.12px #1f1f1f;">Вид</div>
<div class="t" id="m3" style="left:220.57px;top:38.75px;font-size:14px;color:#1f1f1f;transform:scaleX(1.0303);-webkit-text-stroke:0.12px #1f1f1f;">Вставка</div>
<div class="t" id="m4" style="left:291.90px;top:38.75px;font-size:14px;color:#1f1f1f;transform:scaleX(1.0056);-webkit-text-stroke:0.12px #1f1f1f;">Формат</div>
<div class="t" id="m5" style="left:358.95px;top:38.75px;font-size:14px;color:#1f1f1f;transform:scaleX(1.0466);-webkit-text-stroke:0.12px #1f1f1f;">Инструменты</div>
<div class="t" id="m6" style="left:466.47px;top:38.75px;font-size:14px;color:#1f1f1f;transform:scaleX(1.0334);-webkit-text-stroke:0.12px #1f1f1f;">Расширения</div>
<div class="t" id="m7" style="left:567.25px;top:38.75px;font-size:14px;color:#1f1f1f;transform:scaleX(1.0202);-webkit-text-stroke:0.12px #1f1f1f;">Справка</div>
<div class="t" id="share" style="left:1346.14px;top:23.15px;font-size:14px;color:#0d2f66;transform:scaleX(1.1058);-webkit-text-stroke:0.28px #0d2f66;">Настройки Доступа</div>
<div class="t" id="zoom" style="left:229.88px;top:78.15px;font-size:14px;color:#444746;transform:scaleX(1.0216);-webkit-text-stroke:0.22px #444746;">100%</div>
<div class="t" id="style" style="left:317.80px;top:78.15px;font-size:14px;color:#444746;-webkit-text-stroke:0.22px #444746;">Заголово…</div>
<div class="t" id="font" style="left:447.66px;top:78.15px;font-size:14px;color:#444746;transform:scaleX(1.0438);-webkit-text-stroke:0.22px #444746;">Roboto</div>
<div class="t" id="fsz" style="left:579.07px;top:78.15px;font-size:14px;color:#444746;transform:scaleX(0.9299);-webkit-text-stroke:0.22px #444746;">15</div>
<div class="t" id="mode" style="left:1360.89px;top:78.15px;font-size:14px;color:#444746;transform:scaleX(1.0144);-webkit-text-stroke:0.22px #444746;">Редактир…</div>
<div class="t" id="lngP" style="left:1232.96px;top:78.93px;font-size:15.8px;color:#000;transform:scaleX(1.0444);font-weight:bold;">Р</div>
<div class="t" id="lngU" style="left:1244.25px;top:84.00px;font-size:9.8px;color:#000;transform:scaleX(0.8500);font-weight:bold;text-transform:uppercase;">у</div>
<div class="t" id="logo1" style="left:502.78px;top:220.56px;font-size:23.2px;color:#000;transform:scaleX(0.9893);font-weight:bold;font-style:italic;">Лидер ИТ</div>
<div class="t" id="logo2" style="left:500.90px;top:247.63px;font-size:11.3px;color:#1c1c1c;transform:scaleX(1.0670);-webkit-text-stroke:0.2px #1c1c1c;">Центр разработки</div>
<div class="t" id="logo3" style="left:500.90px;top:261.63px;font-size:11.3px;color:#1c1c1c;transform:scaleX(1.0561);-webkit-text-stroke:0.2px #1c1c1c;">программного обеспечения</div>
<div class="t" id="pgn" style="left:1103.90px;top:239.58px;font-size:14.67px;color:#000;transform:scaleX(0.9250);-webkit-text-stroke:0.18px #000;">8</div>
<div class="t" id="p1" style="left:394.00px;top:298.96px;font-size:16px;color:#000;transform:scaleX(1.0286);-webkit-text-stroke:0.1px #000;">Основные коды ошибок:</div>
<div class="t" id="c0" style="left:442.05px;top:338.65px;font-size:14px;color:#111;font-family:'Liberation Mono', monospace;-webkit-text-stroke:0.25px #111;">missing_auth_header</div>
<div class="t" id="ca0" style="left:605.24px;top:336.96px;font-size:16px;color:#000;transform:scaleX(1.0077);-webkit-text-stroke:0.1px #000;">(401)</div>
<div class="t" id="cd0" style="left:648.00px;top:335.96px;font-size:16px;color:#000;transform:scaleX(0.6969);">—</div>
<div class="t" id="ct0" style="left:663.46px;top:336.96px;font-size:16px;color:#000;transform:scaleX(1.0383);-webkit-text-stroke:0.1px #000;">нет заголовка авторизации</div>
<div class="t" id="c1" style="left:441.05px;top:360.65px;font-size:14px;color:#111;font-family:'Liberation Mono', monospace;-webkit-text-stroke:0.25px #111;">token_not_found</div>
<div class="t" id="ca1" style="left:571.64px;top:358.96px;font-size:16px;color:#000;transform:scaleX(1.0077);-webkit-text-stroke:0.1px #000;">(401)</div>
<div class="t" id="cd1" style="left:614.40px;top:357.96px;font-size:16px;color:#000;transform:scaleX(0.6969);">—</div>
<div class="t" id="ct1" style="left:630.90px;top:358.96px;font-size:16px;color:#000;transform:scaleX(1.0225);-webkit-text-stroke:0.1px #000;">токен не найден/недействителен</div>
<div class="t" id="c2" style="left:441.05px;top:382.65px;font-size:14px;color:#111;font-family:'Liberation Mono', monospace;-webkit-text-stroke:0.25px #111;">token_expired</div>
<div class="t" id="ca2" style="left:554.84px;top:380.96px;font-size:16px;color:#000;transform:scaleX(1.0077);-webkit-text-stroke:0.1px #000;">(401)</div>
<div class="t" id="cd2" style="left:597.60px;top:379.96px;font-size:16px;color:#000;transform:scaleX(0.6969);">—</div>
<div class="t" id="ct2" style="left:614.10px;top:380.96px;font-size:16px;color:#000;transform:scaleX(1.0146);-webkit-text-stroke:0.1px #000;">токен истек</div>
<div class="t" id="c3" style="left:442.05px;top:404.65px;font-size:14px;color:#111;font-family:'Liberation Mono', monospace;-webkit-text-stroke:0.25px #111;">invalid_json</div>
<div class="t" id="ca3" style="left:546.44px;top:402.96px;font-size:16px;color:#000;transform:scaleX(1.0077);-webkit-text-stroke:0.1px #000;">(400)</div>
<div class="t" id="cd3" style="left:589.20px;top:401.96px;font-size:16px;color:#000;transform:scaleX(0.6969);">—</div>
<div class="t" id="ct3" style="left:604.69px;top:402.96px;font-size:16px;color:#000;transform:scaleX(1.0108);-webkit-text-stroke:0.1px #000;">некорректный JSON в теле запроса</div>
<div class="t" id="c4" style="left:442.05px;top:426.65px;font-size:14px;color:#111;font-family:'Liberation Mono', monospace;-webkit-text-stroke:0.25px #111;">missing_required_field</div>
<div class="t" id="ca4" style="left:630.44px;top:424.96px;font-size:16px;color:#000;transform:scaleX(1.0077);-webkit-text-stroke:0.1px #000;">(400)</div>
<div class="t" id="cd4" style="left:673.20px;top:423.96px;font-size:16px;color:#000;transform:scaleX(0.6969);">—</div>
<div class="t" id="ct4" style="left:689.70px;top:424.96px;font-size:16px;color:#000;transform:scaleX(1.0105);-webkit-text-stroke:0.1px #000;">отсутствует обязательное поле</div>
<div class="t" id="h1" style="left:391.00px;top:514.84px;font-size:21.33px;color:#000;transform:scaleX(0.9886);font-weight:bold;-webkit-text-stroke:0.35px #000;">4. БИЗНЕС-ЛОГИКА</div>
<div class="t" id="h2an" style="left:394.50px;top:586.70px;font-size:18.67px;color:#000;transform:scaleX(1.1107);font-weight:bold;-webkit-text-stroke:0.3px #000;">4.1.</div>
<div class="t" id="h2a" style="left:433.70px;top:586.70px;font-size:18.67px;color:#000;transform:scaleX(1.0251);font-weight:bold;-webkit-text-stroke:0.3px #000;">Автоматическое предодобрение</div>
<div class="t" id="b0" style="left:442.25px;top:636.96px;font-size:16px;color:#000;transform:scaleX(1.0104);-webkit-text-stroke:0.1px #000;">Условие: Сумма заявки ≥100 000 ₽</div>
<div class="t" id="b1" style="left:442.25px;top:658.96px;font-size:16px;color:#000;transform:scaleX(1.0184);-webkit-text-stroke:0.1px #000;">Автоматический лимит: до 5 000 000 ₽</div>
<div class="t" id="b2" style="left:441.24px;top:680.96px;font-size:16px;color:#000;transform:scaleX(1.0095);-webkit-text-stroke:0.1px #000;">Пример: Клиент запрашивает 7 000 000 ₽ → предодобряем 5 000 000 ₽</div>
<div class="t" id="r1" style="left:393.68px;top:718.96px;font-size:16px;color:#000;transform:scaleX(1.0198);-webkit-text-stroke:0.1px #000;">Рекомендация для</div>
<div class="t" id="r2" style="left:540.91px;top:718.96px;font-size:16px;color:#3a47ee;transform:scaleX(0.9895);">Banki.ru</div>
<div class="t" id="r3" style="left:599.18px;top:718.96px;font-size:16px;color:#000;transform:scaleX(1.0188);-webkit-text-stroke:0.1px #000;">: Установить минимальный лимит 100000 руб. при заполнении</div>
<div class="t" id="r4" style="left:394.25px;top:740.96px;font-size:16px;color:#000;transform:scaleX(1.0652);-webkit-text-stroke:0.1px #000;">заявки.</div>
<div class="t" id="h2bn" style="left:394.40px;top:796.90px;font-size:18.67px;color:#000;transform:scaleX(1.0874);font-weight:bold;-webkit-text-stroke:0.3px #000;">4.2.</div>
<div class="t" id="h2b" style="left:432.79px;top:796.90px;font-size:18.67px;color:#000;transform:scaleX(1.0054);font-weight:bold;-webkit-text-stroke:0.3px #000;">Геофильтрация</div>
<svg style="left:0;top:0" width="1600" height="820" viewBox="0 0 1600 820"><polyline points="441.30,375.5 443.00,374.0 444.70,375.5 446.40,374.0 448.10,375.5 449.80,374.0 451.50,375.5 453.20,374.0 454.90,375.5 456.60,374.0 458.30,375.5 460.00,374.0 461.70,375.5 463.40,374.0 465.10,375.5 466.80,374.0 468.50,375.5 470.20,374.0 471.90,375.5 473.60,374.0 475.30,375.5 477.00,374.0 478.70,375.5 480.40,374.0 482.10,375.5 483.80,374.0 485.50,375.5 487.20,374.0 488.90,375.5 490.60,374.0 492.30,375.5 494.00,374.0 495.70,375.5 497.40,374.0 499.10,375.5 500.80,374.0 502.50,375.5 504.20,374.0 505.90,375.5 507.60,374.0 509.30,375.5 511.00,374.0 512.70,375.5 514.40,374.0 516.10,375.5 517.80,374.0 519.50,375.5 521.20,374.0 522.90,375.5 524.60,374.0 526.30,375.5 528.00,374.0 529.70,375.5 531.40,374.0 533.10,375.5 534.80,374.0 536.50,375.5 538.20,374.0 539.90,375.5 541.60,374.0 543.30,375.5 545.00,374.0 546.70,375.5 548.40,374.0 550.10,375.5 551.80,374.0 553.50,375.5 555.20,374.0 556.90,375.5 558.60,374.0 560.30,375.5 562.00,374.0 563.70,375.5 565.40,374.0 567.10,375.5" fill="none" stroke="#e0061f" stroke-width="1.2" stroke-linejoin="round"/>
<polyline points="441.30,397.5 443.00,396.0 444.70,397.5 446.40,396.0 448.10,397.5 449.80,396.0 451.50,397.5 453.20,396.0 454.90,397.5 456.60,396.0 458.30,397.5 460.00,396.0 461.70,397.5 463.40,396.0 465.10,397.5 466.80,396.0 468.50,397.5 470.20,396.0 471.90,397.5 473.60,396.0 475.30,397.5 477.00,396.0 478.70,397.5 480.40,396.0 482.10,397.5 483.80,396.0 485.50,397.5 487.20,396.0 488.90,397.5 490.60,396.0 492.30,397.5 494.00,396.0 495.70,397.5 497.40,396.0 499.10,397.5 500.80,396.0 502.50,397.5 504.20,396.0 505.90,397.5 507.60,396.0 509.30,397.5 511.00,396.0 512.70,397.5 514.40,396.0 516.10,397.5 517.80,396.0 519.50,397.5 521.20,396.0 522.90,397.5 524.60,396.0 526.30,397.5 528.00,396.0 529.70,397.5 531.40,396.0 533.10,397.5 534.80,396.0 536.50,397.5 538.20,396.0 539.90,397.5 541.60,396.0 543.30,397.5 545.00,396.0 546.70,397.5 548.40,396.0 550.10,397.5" fill="none" stroke="#e0061f" stroke-width="1.2" stroke-linejoin="round"/>
<polyline points="441.30,419.5 443.00,418.0 444.70,419.5 446.40,418.0 448.10,419.5 449.80,418.0 451.50,419.5 453.20,418.0 454.90,419.5 456.60,418.0 458.30,419.5 460.00,418.0 461.70,419.5 463.40,418.0 465.10,419.5 466.80,418.0 468.50,419.5 470.20,418.0 471.90,419.5 473.60,418.0 475.30,419.5 477.00,418.0 478.70,419.5 480.40,418.0 482.10,419.5 483.80,418.0 485.50,419.5 487.20,418.0 488.90,419.5 490.60,418.0 492.30,419.5 494.00,418.0 495.70,419.5 497.40,418.0 499.10,419.5 500.80,418.0 502.50,419.5 504.20,418.0 505.90,419.5 507.60,418.0 509.30,419.5 511.00,418.0 512.70,419.5 514.40,418.0 516.10,419.5 517.80,418.0 519.50,419.5 521.20,418.0 522.90,419.5 524.60,418.0 526.30,419.5 528.00,418.0 529.70,419.5 531.40,418.0 533.10,419.5 534.80,418.0 536.50,419.5 538.20,418.0 539.90,419.5 541.60,418.0" fill="none" stroke="#e0061f" stroke-width="1.2" stroke-linejoin="round"/>
<polyline points="596.50,606.3 598.20,604.8 599.90,606.3 601.60,604.8 603.30,606.3 605.00,604.8 606.70,606.3 608.40,604.8 610.10,606.3 611.80,604.8 613.50,606.3 615.20,604.8 616.90,606.3 618.60,604.8 620.30,606.3 622.00,604.8 623.70,606.3 625.40,604.8 627.10,606.3 628.80,604.8 630.50,606.3 632.20,604.8 633.90,606.3 635.60,604.8 637.30,606.3 639.00,604.8 640.70,606.3 642.40,604.8 644.10,606.3 645.80,604.8 647.50,606.3 649.20,604.8 650.90,606.3 652.60,604.8 654.30,606.3 656.00,604.8 657.70,606.3 659.40,604.8 661.10,606.3 662.80,604.8 664.50,606.3 666.20,604.8 667.90,606.3 669.60,604.8 671.30,606.3 673.00,604.8 674.70,606.3 676.40,604.8 678.10,606.3 679.80,604.8 681.50,606.3 683.20,604.8 684.90,606.3 686.60,604.8 688.30,606.3 690.00,604.8 691.70,606.3 693.40,604.8 695.10,606.3 696.80,604.8 698.50,606.3 700.20,604.8 701.90,606.3 703.60,604.8 705.30,606.3 707.00,604.8 708.70,606.3 710.40,604.8 712.10,606.3 713.80,604.8 715.50,606.3 717.20,604.8 718.90,606.3 720.60,604.8 722.30,606.3 724.00,604.8 725.70,606.3 727.40,604.8 729.10,606.3 730.80,604.8 732.50,606.3 734.20,604.8 735.90,606.3 737.60,604.8 739.30,606.3 741.00,604.8 742.70,606.3" fill="none" stroke="#e0061f" stroke-width="1.2" stroke-linejoin="round"/>
<polyline points="780.00,698.2 781.70,696.7 783.40,698.2 785.10,696.7 786.80,698.2 788.50,696.7 790.20,698.2 791.90,696.7 793.60,698.2 795.30,696.7 797.00,698.2 798.70,696.7 800.40,698.2 802.10,696.7 803.80,698.2 805.50,696.7 807.20,698.2 808.90,696.7 810.60,698.2 812.30,696.7 814.00,698.2 815.70,696.7 817.40,698.2 819.10,696.7 820.80,698.2 822.50,696.7 824.20,698.2 825.90,696.7 827.60,698.2 829.30,696.7 831.00,698.2 832.70,696.7 834.40,698.2 836.10,696.7 837.80,698.2 839.50,696.7 841.20,698.2 842.90,696.7 844.60,698.2 846.30,696.7 848.00,698.2 849.70,696.7 851.40,698.2 853.10,696.7 854.80,698.2 856.50,696.7 858.20,698.2 859.90,696.7 861.60,698.2 863.30,696.7 865.00,698.2 866.70,696.7 868.40,698.2 870.10,696.7 871.80,698.2 873.50,696.7 875.20,698.2 876.90,696.7 878.60,698.2 880.30,696.7 882.00,698.2 883.70,696.7 885.40,698.2 887.10,696.7 888.80,698.2" fill="none" stroke="#e0061f" stroke-width="1.2" stroke-linejoin="round"/>
<polyline points="433.80,817.1 435.50,815.6 437.20,817.1 438.90,815.6 440.60,817.1 442.30,815.6 444.00,817.1 445.70,815.6 447.40,817.1 449.10,815.6 450.80,817.1 452.50,815.6 454.20,817.1 455.90,815.6 457.60,817.1 459.30,815.6 461.00,817.1 462.70,815.6 464.40,817.1 466.10,815.6 467.80,817.1 469.50,815.6 471.20,817.1 472.90,815.6 474.60,817.1 476.30,815.6 478.00,817.1 479.70,815.6 481.40,817.1 483.10,815.6 484.80,817.1 486.50,815.6 488.20,817.1 489.90,815.6 491.60,817.1 493.30,815.6 495.00,817.1 496.70,815.6 498.40,817.1 500.10,815.6 501.80,817.1 503.50,815.6 505.20,817.1 506.90,815.6 508.60,817.1 510.30,815.6 512.00,817.1 513.70,815.6 515.40,817.1 517.10,815.6 518.80,817.1 520.50,815.6 522.20,817.1 523.90,815.6 525.60,817.1 527.30,815.6 529.00,817.1 530.70,815.6 532.40,817.1 534.10,815.6 535.80,817.1 537.50,815.6 539.20,817.1 540.90,815.6 542.60,817.1 544.30,815.6 546.00,817.1 547.70,815.6 549.40,817.1 551.10,815.6 552.80,817.1 554.50,815.6 556.20,817.1 557.90,815.6 559.60,817.1 561.30,815.6 563.00,817.1 564.70,815.6 566.40,817.1 568.10,815.6 569.80,817.1 571.50,815.6 573.20,817.1 574.90,815.6 576.60,817.1 578.30,815.6" fill="none" stroke="#e0061f" stroke-width="1.2" stroke-linejoin="round"/></svg>
<!-- side panel icons -->
<!-- calendar -->
<svg style="left:1562.400px;top:77.800px;will-change:transform" width="18.400" height="18.300" viewBox="0 0 18 18">
<rect x="0" y="0" width="18" height="18" rx="1.600" fill="#fff"/>
<path d="M1.500 0h13v3.500H3.500v11H0V1.500A1.500 1.500 0 0 1 1.500 0z" fill="#4a6cf7"/>
<path d="M14.500 0h2A1.500 1.500 0 0 1 18 1.500v2h-3.500z" fill="#2a47c9"/>
<rect x="14.500" y="3.500" width="3.500" height="11" fill="#fbbc04"/>
<path d="M0 14.500h3.500V18H1.500A1.500 1.500 0 0 1 0 16.500z" fill="#188038"/>
<rect x="3.500" y="14.500" width="11" height="3.500" fill="#34a853"/>
<path d="M14.500 14.500H18L14.500 18z" fill="#ea4335"/>
<text x="8.800" y="11.900" font-size="7.800" font-weight="bold" text-anchor="middle" fill="#4a6cf7" font-family="Liberation Sans, sans-serif" letter-spacing="-.4">31</text>
</svg>
<!-- keep -->
<svg style="left:1555px;top:125px" width="35" height="35" viewBox="1555 125 35 35">
<rect x="1562.300" y="133.100" width="19.500" height="19.600" rx="2" fill="#f3b605"/>
<circle cx="1572" cy="142.100" r="3.950" fill="#fff"/><rect x="1570.300" y="144.500" width="3.400" height="1.300" fill="#fff"/>
<rect x="1570" y="147" width="4" height="1.300" fill="#fff"/>
</svg>
<!-- tasks -->
<svg style="left:1555px;top:180px" width="35" height="35" viewBox="1555 180 35 35">
<circle cx="1572.100" cy="199" r="6.900" fill="none" stroke="#4a6cf7" stroke-width="2.600"/>
<path d="M1568.700 198.400L1572.100 201.800 1577.800 195.200" fill="none" stroke="#4a6cf7" stroke-width="2.700"/>
<path d="M1577.900 194.100L1580.100 192.300" stroke="#2f4bd0" stroke-width="3" stroke-linecap="round"/>
</svg>
<!-- contacts -->
<svg style="left:1555px;top:238px" width="35" height="35" viewBox="1555 238 35 35">
<circle cx="1572" cy="249.900" r="3.300" fill="#2f3ec4"/>
<path d="M1565 263V259.600A5.200 5.200 0 0 1 1570.200 254.400H1574.500A4.600 4.600 0 0 1 1579.100 259V259.800A3.200 3.200 0 0 1 1575.900 263z" fill="#647af8"/>
<path d="M1565 263V259.600A5.200 5.200 0 0 1 1568.500 254.700V263z" fill="#8c9efa"/>
<rect x="1568" y="254.800" width="7.900" height="8.200" rx="1.500" fill="#2f3ec4"/>
</svg>
<!-- maps -->
<svg style="left:1565.200px;top:301.800px" width="13.600" height="18.200" viewBox="0 0 15 19" preserveAspectRatio="none">
<path d="M7.500 0C3.400 0 0 3.200 0 7.200c0 3.300 2.400 5.300 4.400 7.800 1.300 1.600 1.900 2.700 2.300 3.500.3.700 1.300.7 1.600 0 .4-.8 1-1.900 2.300-3.500 2-2.500 4.400-4.500 4.400-7.800C15 3.200 11.600 0 7.500 0z" fill="#34a853"/>
<path d="M7.500 0C5.200 0 3.200 1 1.800 2.600l3.800 3.200L10.800.8C9.800.3 8.700 0 7.500 0z" fill="#4a6cf7"/>
<path d="M1.800 2.600C.7 3.800 0 5.400 0 7.200c0 1.300.4 2.400 1 3.400l4.600-4.800z" fill="#ea4335"/>
<path d="M1 10.600c.9 1.500 2.200 2.800 3.400 4.400L9.400 9 5.600 5.800z" fill="#fbbc04"/>
<path d="M10.800.8L5.600 5.800 9.400 9l4.900-5.100C13.500 2.500 12.300 1.400 10.800.8z" fill="#6a8bf7"/>
<circle cx="7.500" cy="7.200" r="2.600" fill="#fff"/>
</svg>
<div class="a" style="left:1562px;top:355px;width:20px;height:1px;background:#d5d8dc"></div>
<!-- plus -->
<div class="a" style="left:1565px;top:399px;width:14px;height:2px;background:#111"></div>
<div class="a" style="left:1571px;top:393px;width:2px;height:14px;background:#111"></div>
<!-- chevron -->
<svg class="ic" style="left:1560.600px;top:781px" width="22" height="22" viewBox="0 0 24 24"><path d="M10 6L8.590 7.410 13.170 12l-4.580 4.590L10 18l6-6z"/></svg>

</body></html>
